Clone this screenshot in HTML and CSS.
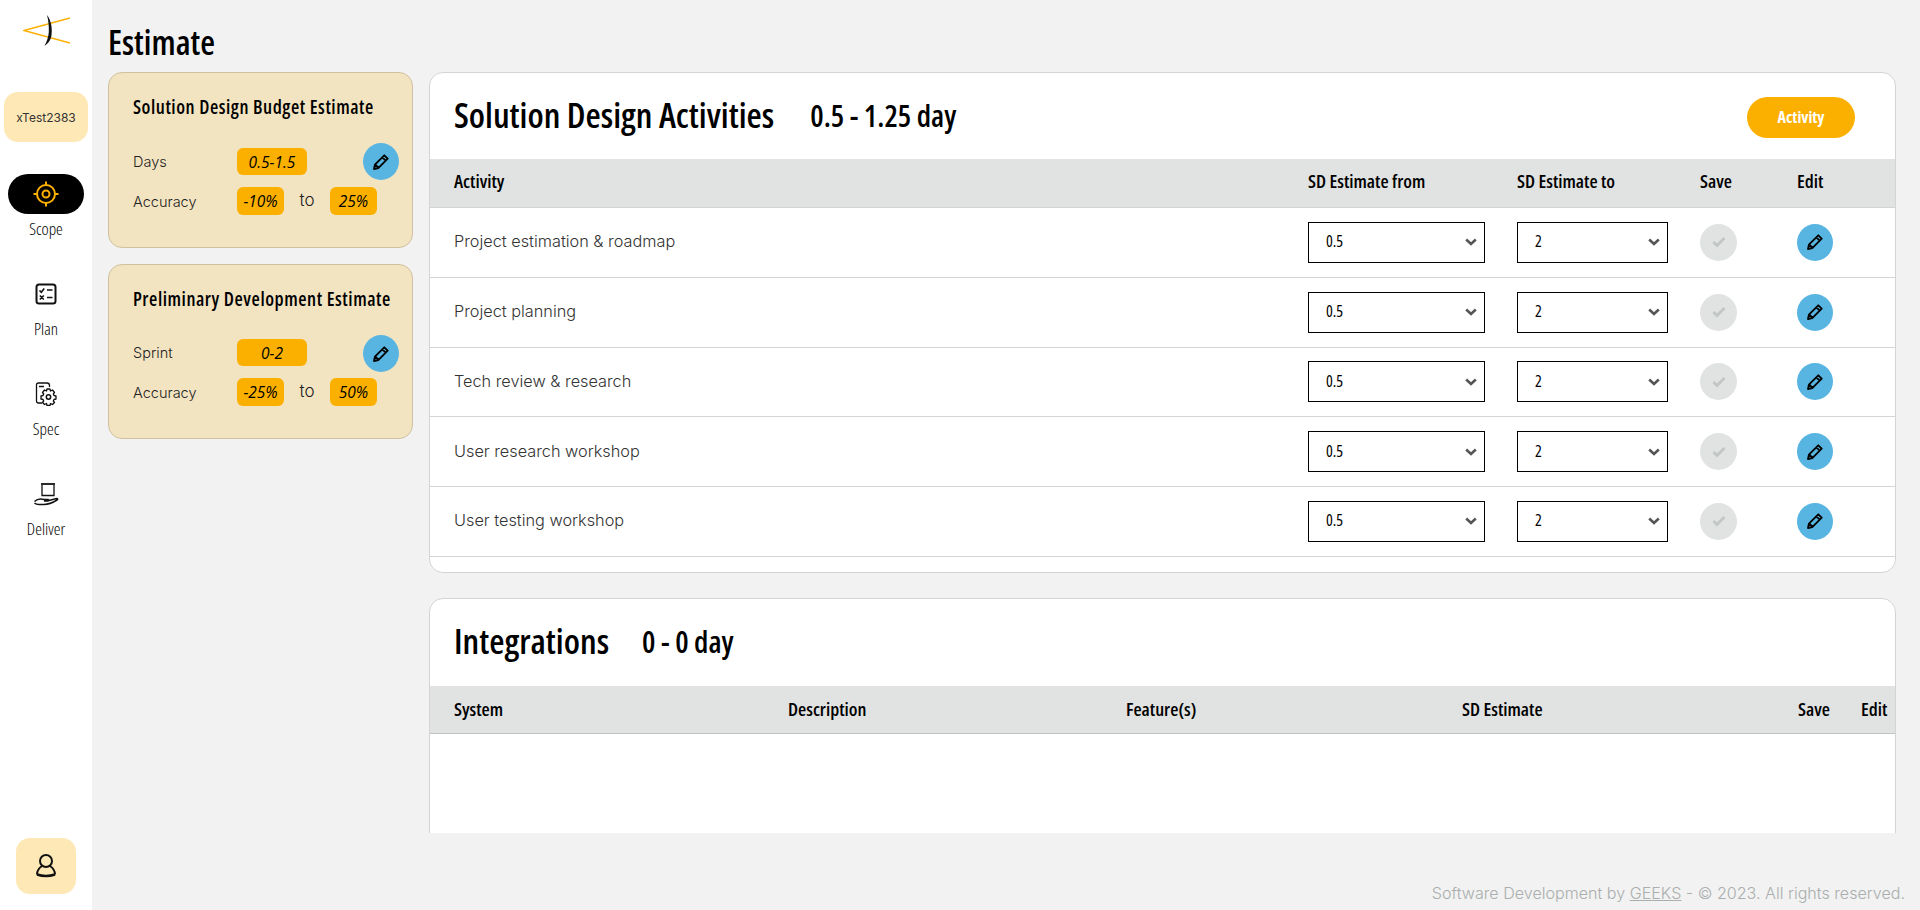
FILE: index.html
```html
<!DOCTYPE html>
<html lang="en">
<head>
<meta charset="utf-8">
<title>Estimate</title>
<link rel="stylesheet" href="styles.css">
</head>
<body>
<svg class="defs" width="0" height="0" aria-hidden="true">
  <symbol id="pencil" viewBox="0 0 16 16">
    <path d="M11.300 1.300 14.700 4.700 5.300 14.100 1 15 1.900 10.700Z M9.300 3.300 12.700 6.700 M2.400 10.600 5.400 13.600" fill="none" stroke="currentColor" stroke-width="1.800" stroke-linejoin="round"/>
  </symbol>
</svg>
<div class="app">
  <aside class="sidebar">
    <svg class="logo" width="47" height="32" viewBox="0 0 47 32">
      <path d="M47 3 1 15.500 47 28" fill="none" stroke="#fbb000" stroke-width="1.500"/>
      <path d="M24 0C28 5 29.500 13 28.500 20 28 24 26 28 21.500 31 24 26 25.500 22 25.800 17 26 11 25.500 6 24 0Z" fill="#111"/>
    </svg>
    <div class="project">xTest2383</div>
    <nav class="nav">
      <a class="nav-item active">
        <span class="nav-pill">
          <svg width="26" height="26" viewBox="0 0 26 26" fill="none" stroke="#fbb000" stroke-width="2"><circle cx="13" cy="13" r="9"/><circle cx="13" cy="13" r="3.500"/><path d="M13 0.500V5M13 21V25.500M0.500 13H5M21 13H25.500"/></svg>
        </span>
        <span class="nav-label">Scope</span>
      </a>
      <a class="nav-item">
        <span class="nav-pill">
          <svg width="22" height="22" viewBox="0 0 22 22" fill="none" stroke="#111" stroke-width="2"><rect x="1.500" y="1.500" width="19" height="19" rx="2.500"/><path d="M4.500 7.500 6.300 9.200 9.200 5.500M12 7H17.500M4.800 12.500 8.800 16.500M8.800 12.500 4.800 16.500M12 14.500H17.500" stroke-width="1.600"/></svg>
        </span>
        <span class="nav-label">Plan</span>
      </a>
      <a class="nav-item">
        <span class="nav-pill">
          <svg width="22" height="24" viewBox="0 0 22 24" fill="none" stroke="#111" stroke-width="1.300"><path d="M7 21H3.500Q1.500 21 1.500 19V3Q1.500 1 3.500 1H12Q14.500 1 14.500 3.500V5"/><path d="M4 4.500H9" stroke-width="1.500"/><circle cx="13.500" cy="15" r="2.200" stroke-width="1.500"/><path d="M12 7H15L15.500 9 17.500 8 19.500 10.500 18.300 12 19 13.500 21 14V17L19 17.500 18.300 19 19.500 20.500 17.500 22.500 15.500 21.500 15 23.500H12L11.500 21.500 9.500 22.500 7.500 20.500 8.700 19 8 17.500 6 17V14L8 13.500 8.700 12 7.500 10.500 9.500 8 11.500 9Z" stroke-linejoin="round"/></svg>
        </span>
        <span class="nav-label">Spec</span>
      </a>
      <a class="nav-item">
        <span class="nav-pill">
          <svg width="26" height="24" viewBox="0 0 26 24" fill="none" stroke="#111" stroke-width="1.300"><path d="M8 2H22" stroke-width="1.800"/><path d="M9 3V13.500H21V3"/><path d="M1.500 19.500C4 17 8 16.500 11 17.500H15Q16.500 18 15 19H11M16 18.500 23.500 16.500C25 16.500 25 17.500 24 18 20 20.500 16 22.500 11 22.500H6C4 22.500 2.500 22 1.500 21" stroke-width="1.500"/></svg>
        </span>
        <span class="nav-label">Deliver</span>
      </a>
    </nav>
    <a class="user">
      <svg width="20" height="24" viewBox="0 0 20 24" fill="none" stroke="#111" stroke-width="2"><circle cx="10" cy="7" r="6"/><path d="M6 12C3 14 1 17 1 20.500M14 12C17 14 19 17 19 20.500"/><path d="M1 20.500Q10 23.500 19 20.500" stroke-width="2.400"/></svg>
    </a>
  </aside>

  <main class="main">
    <h1 class="page-title">Estimate</h1>
    <div class="content">
      <div class="cards">
        <section class="card">
          <h2 class="card-title">Solution Design Budget Estimate</h2>
          <div class="card-grid">
            <span class="card-label">Days</span>
            <span class="tag tag-wide">0.5-1.5</span>
            <button class="round-btn edit card-edit"><svg width="16" height="16"><use href="#pencil"/></svg></button>
            <span class="card-label">Accuracy</span>
            <span class="tag">-10%</span>
            <span class="to">to</span>
            <span class="tag">25%</span>
          </div>
        </section>
        <section class="card">
          <h2 class="card-title">Preliminary Development Estimate</h2>
          <div class="card-grid">
            <span class="card-label">Sprint</span>
            <span class="tag tag-wide">0-2</span>
            <button class="round-btn edit card-edit"><svg width="16" height="16"><use href="#pencil"/></svg></button>
            <span class="card-label">Accuracy</span>
            <span class="tag">-25%</span>
            <span class="to">to</span>
            <span class="tag">50%</span>
          </div>
        </section>
      </div>

      <div class="panels">
        <section class="panel panel-activities">
          <header class="panel-head">
            <h2 class="panel-title">Solution Design Activities</h2>
            <span class="panel-range range-first">0.5 - 1.25 day</span>
            <button class="add-btn">Activity</button>
          </header>
          <div class="row row-head">
            <span>Activity</span><span>SD Estimate from</span><span>SD Estimate to</span><span>Save</span><span>Edit</span>
          </div>
          <div class="row">
            <span class="row-name">Project estimation &amp; roadmap</span>
            <select class="sel sel-from"><option>0.5</option></select>
            <select class="sel sel-to"><option>2</option></select>
            <button class="round-btn save"><svg width="14" height="12" viewBox="0 0 14 12"><path d="M1.500 6 5 9.500 12.500 2" fill="none" stroke="currentColor" stroke-width="3"/></svg></button>
            <button class="round-btn edit"><svg width="16" height="16"><use href="#pencil"/></svg></button>
          </div>
          <div class="row">
            <span class="row-name">Project planning</span>
            <select class="sel sel-from"><option>0.5</option></select>
            <select class="sel sel-to"><option>2</option></select>
            <button class="round-btn save"><svg width="14" height="12" viewBox="0 0 14 12"><path d="M1.500 6 5 9.500 12.500 2" fill="none" stroke="currentColor" stroke-width="3"/></svg></button>
            <button class="round-btn edit"><svg width="16" height="16"><use href="#pencil"/></svg></button>
          </div>
          <div class="row">
            <span class="row-name">Tech review &amp; research</span>
            <select class="sel sel-from"><option>0.5</option></select>
            <select class="sel sel-to"><option>2</option></select>
            <button class="round-btn save"><svg width="14" height="12" viewBox="0 0 14 12"><path d="M1.500 6 5 9.500 12.500 2" fill="none" stroke="currentColor" stroke-width="3"/></svg></button>
            <button class="round-btn edit"><svg width="16" height="16"><use href="#pencil"/></svg></button>
          </div>
          <div class="row">
            <span class="row-name">User research workshop</span>
            <select class="sel sel-from"><option>0.5</option></select>
            <select class="sel sel-to"><option>2</option></select>
            <button class="round-btn save"><svg width="14" height="12" viewBox="0 0 14 12"><path d="M1.500 6 5 9.500 12.500 2" fill="none" stroke="currentColor" stroke-width="3"/></svg></button>
            <button class="round-btn edit"><svg width="16" height="16"><use href="#pencil"/></svg></button>
          </div>
          <div class="row">
            <span class="row-name">User testing workshop</span>
            <select class="sel sel-from"><option>0.5</option></select>
            <select class="sel sel-to"><option>2</option></select>
            <button class="round-btn save"><svg width="14" height="12" viewBox="0 0 14 12"><path d="M1.500 6 5 9.500 12.500 2" fill="none" stroke="currentColor" stroke-width="3"/></svg></button>
            <button class="round-btn edit"><svg width="16" height="16"><use href="#pencil"/></svg></button>
          </div>
        </section>

        <section class="panel panel-integrations">
          <header class="panel-head">
            <h2 class="panel-title">Integrations</h2>
            <span class="panel-range range-second">0 - 0 day</span>
          </header>
          <div class="int-head">
            <span>System</span><span>Description</span><span>Feature(s)</span><span>SD Estimate</span><span>Save</span><span>Edit</span>
          </div>
        </section>
      </div>
    </div>
    <footer class="footer">Software Development by <a class="footer-link">GEEKS</a> - © 2023. All rights reserved.</footer>
  </main>
</div>
</body>
</html>
```
FILE: styles.css
```css
* { box-sizing: border-box; }
html, body { margin: 0; height: 100%; }
body {
  height: 910px;
  overflow: hidden;
  background: #f2f2f2;
  color: #000;
  font-family: "Inter", "Lato", sans-serif;
  font-weight: 300;
}
.defs { position: absolute; }
h1, h2 { margin: 0; }
.app { display: flex; height: 910px; }

.nav-label, .page-title, .card-title, .tag, .panel-title, .panel-range, .add-btn, .row-head, .sel, .int-head {
  font-family: "Open Sans", "Noto Sans", sans-serif;
  font-stretch: 75%;
}

.sidebar {
  width: 92px;
  flex: none;
  background: #fff;
  display: flex;
  flex-direction: column;
  align-items: center;
}
.logo { margin-top: 15px; }
.project {
  margin-top: 45px;
  width: 84px;
  height: 50px;
  background: #fee8b6;
  border-radius: 14px;
  display: flex;
  align-items: center;
  justify-content: center;
  font-size: 12px;
  font-weight: 400;
  color: #333;
}
.nav { margin-top: 32px; display: flex; flex-direction: column; }
.nav-item { height: 100px; display: flex; flex-direction: column; align-items: center; }
.nav-pill {
  width: 76px;
  height: 40px;
  border-radius: 20px;
  display: flex;
  align-items: center;
  justify-content: center;
}
.active .nav-pill { background: #000; }
.nav-label {
  margin-top: 5px;
  font-size: 17px;
  font-weight: 350;
  line-height: 20px;
}
.user {
  margin-top: auto;
  margin-bottom: 16px;
  width: 60px;
  height: 56px;
  background: #fee8b6;
  border-radius: 14px;
  display: flex;
  align-items: center;
  justify-content: center;
}

.main {
  flex: 1;
  min-width: 0;
  padding: 0 24px 0 16px;
  display: flex;
  flex-direction: column;
}
.page-title {
  height: 72px;
  padding-top: 22px;
  font-size: 34px;
  line-height: 40px;
  font-weight: 600;
}
.content {
  height: 761px;
  overflow: hidden;
  display: flex;
  gap: 16px;
  align-items: flex-start;
}
.cards { width: 305px; flex: none; display: flex; flex-direction: column; gap: 16px; }
.card {
  height: 175px;
  background: #f3e4c1;
  border: 1px solid #cfc09f;
  border-radius: 14px;
  padding: 22px 10px 0 24px;
}
.card:first-child { height: 176px; }
.card-title {
  font-size: 19px;
  line-height: 24px;
  font-weight: 600;
  letter-spacing: .55px;
  white-space: nowrap;
}
.card-grid {
  margin-top: 28px;
  display: grid;
  grid-template-columns: 104px 47px 46px 47px 1fr;
  grid-template-rows: 27px 28px;
  row-gap: 12px;
  align-items: center;
  position: relative;
}
.card:first-child .card-grid { margin-top: 29px; }
.card-label { font-size: 14.500px; color: #222; grid-column: 1; }
.tag {
  height: 100%;
  background: #fbb000;
  border-radius: 6px;
  display: flex;
  align-items: center;
  justify-content: center;
  font-style: italic;
  font-weight: 400;
  font-size: 15.500px;
  font-stretch: 88%;
}
.tag-wide { grid-column: 2 / span 2; width: 70px; }
.to { text-align: center; font-size: 17px; color: #222; padding-bottom: 3px; }
.card-edit { position: absolute; left: 230px; top: -4px; width: 37px; }
.card:first-child .card-edit { top: -5px; }

.round-btn {
  width: 37px;
  height: 37px;
  padding: 0;
  border: 0;
  border-radius: 50%;
  display: flex;
  align-items: center;
  justify-content: center;
}
.edit { background: #58b5e1; color: #000; width: 36px; }
.save { background: #e1e3e2; color: #c2c6c5; }

.panels { flex: 1; min-width: 0; display: flex; flex-direction: column; gap: 25px; }
.panel { background: #fff; border: 1px solid #d3d5d4; border-radius: 14px; }
.panel-activities { height: 501px; }
.panel-integrations { height: 320px; flex: none; }
.panel-head { display: flex; align-items: center; height: 86px; padding: 0 40px 2px 24px; }
.panel-integrations .panel-head { height: 87px; padding-bottom: 3px; }
.panel-title {
  font-size: 35px;
  line-height: 40px;
  font-weight: 600;
}
.panel-range {
  font-size: 30px;
  font-weight: 600;
}
.range-first { margin-left: 36px; }
.range-second { margin-left: 33px; }
.add-btn {
  margin-left: auto;
  margin-top: 4px;
  width: 108px;
  height: 41px;
  border: 0;
  border-radius: 21px;
  background: #fbb000;
  color: #fff;
  font-size: 16px;
  font-weight: 700;
}
.row {
  display: grid;
  grid-template-columns: 854px 209px 183px 97px 1fr;
  align-items: center;
  height: 69.750px;
  padding-left: 24px;
  border-bottom: 1px solid #d3d5d4;
}
.row-head {
  height: 49px;
  padding-bottom: 4px;
  background: #e1e3e2;
  font-size: 18.800px;
  font-weight: 600;
}
.row-name { font-size: 16.300px; color: #333; padding-bottom: 2px; }
.sel {
  height: 41px;
  appearance: none;
  border: 1px solid #000;
  border-radius: 0;
  background: #fff url("data:image/svg+xml,%3Csvg xmlns='http://www.w3.org/2000/svg' width='12' height='8' viewBox='0 0 12 8'%3E%3Cpath d='M1.200 1.500 6 6 10.800 1.500' fill='none' stroke='%23555' stroke-width='2.600'/%3E%3C/svg%3E") no-repeat right 7px center;
  padding: 0 0 2px 17px;
  font-size: 16px;
  font-weight: 500;
  color: #000;
}
.sel-from { width: 177px; }
.sel-to { width: 151px; }
.int-head {
  display: grid;
  grid-template-columns: 334px 338px 336px 336px 63px 1fr;
  align-items: center;
  height: 48px;
  padding: 0 0 2px 24px;
  background: #e1e3e2;
  border-bottom: 1px solid #bfc4c3;
  font-size: 18.800px;
  font-weight: 600;
}
.footer {
  margin-top: auto;
  margin-right: -9px;
  padding-bottom: 7px;
  text-align: right;
  font-size: 16.100px;
  line-height: 20px;
  color: #aaaeae;
}
.footer-link { text-decoration: underline; }
```
